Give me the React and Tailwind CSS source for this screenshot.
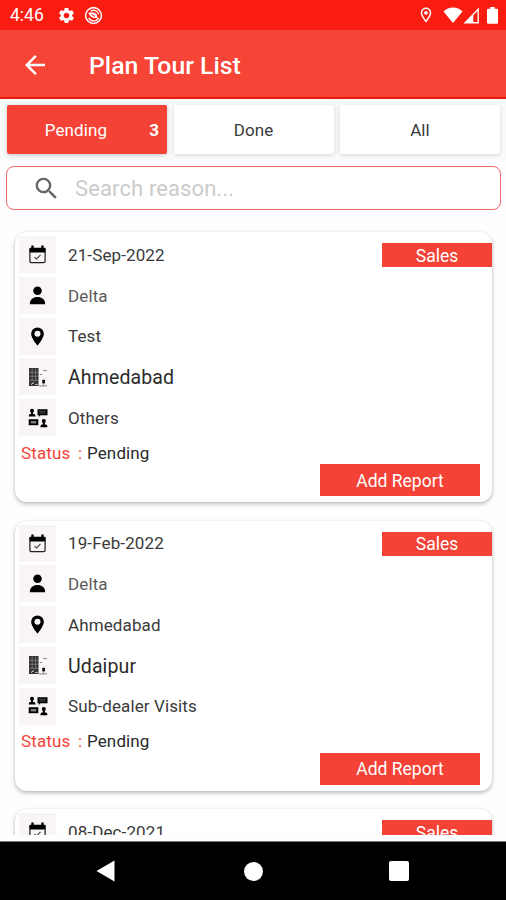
import { MdArrowBack, MdSearch, MdSettings, MdOutlineLocationOn } from 'react-icons/md'

const visits = [
  { date: '21-Sep-2022', dealer: 'Delta', place: 'Test', city: 'Ahmedabad', reason: 'Others', status: 'Pending', type: 'Sales' },
  { date: '19-Feb-2022', dealer: 'Delta', place: 'Ahmedabad', city: 'Udaipur', reason: 'Sub-dealer Visits', status: 'Pending', type: 'Sales' },
  { date: '08-Dec-2021', type: 'Sales' },
]

function CalendarIcon() {
  return (
    <svg className="size-[19px]" viewBox="0 0 20 20" fill="none">
      <path d="M2 7.500V17q0 1.500 1.500 1.500h13q1.500 0 1.500-1.500V7.500" stroke="#222" strokeWidth="1.300" />
      <path d="M1.300 8V4.300Q1.300 2.800 2.800 2.800H3.500V.500h2.500v2.300h8V.500h2.500v2.300h.700Q18.700 2.800 18.700 4.300V8z" fill="#000" />
      <path d="M6.700 12.700l2.300 2 4.200-4.300" stroke="#444" strokeWidth="1.200" />
    </svg>
  )
}

function PersonIcon() {
  return (
    <svg className="size-[19px]" viewBox="0 0 20 20">
      <circle cx="10" cy="5" r="4.500" />
      <path d="M2 19.300v-1c0-4 3.500-6.800 8-6.800s8 2.800 8 6.800v1z" />
    </svg>
  )
}

function PinIcon() {
  return (
    <svg className="size-[19px]" viewBox="0 0 20 20">
      <path fillRule="evenodd" d="M10 .500a6.700 6.700 0 0 0-6.700 6.700C3.300 12 10 19.700 10 19.700s6.700-7.700 6.700-12.500A6.700 6.700 0 0 0 10 .500zm0 3.400a3.200 3.200 0 1 1 0 6.400 3.200 3.200 0 0 1 0-6.400z" />
    </svg>
  )
}

function BuildingIcon() {
  return (
    <svg className="size-5" viewBox="0 0 20 20" fill="none">
      <path d="M1 1h9.500v18H1z" fill="#333" />
      <path d="M1 5.300h9M1 9.300h9M1 13.300h9M4.200 1.500v12.500M7.500 1.500v12.500" stroke="#888" strokeWidth=".7" />
      <path d="M3 17.500l3-2M7.500 17.500h2" stroke="#ddd" strokeWidth="1" />
      <path d="M11.800 7.500h2.300M15 3.600h4" stroke="#888" strokeWidth="1" />
      <path d="M14.200 12.800h2.800v3.600h-2.800z" fill="#111" />
      <path d="M15.600 16v2.500M11 18.900h8" stroke="#777" strokeWidth=".9" />
    </svg>
  )
}

function MeetingIcon() {
  return (
    <svg className="size-5" viewBox="0 0 20 20">
      <circle cx="4" cy="2.800" r="2" />
      <path d="M3 4h2v2h1.300Q7.500 6 7.500 8.500H.700Q.700 6 1.900 6H3z" />
      <path d="M9.500 1.200h10v6h-7L10.800 9V7.200H9.500z" />
      <path d="M11.500 3.300h6M11.500 5.100h6" stroke="#777" strokeWidth=".7" />
      <path d="M.700 11.200h9.600v6H.700z" />
      <path d="M2.800 13.100h5.400v2.300H2.800z" fill="#888" />
      <circle cx="15.800" cy="13" r="2" />
      <path d="M14.800 14h2v2.500h1.300q1.300 0 1.300 2.700h-7q0-2.700 1.300-2.700h1.100z" />
    </svg>
  )
}

function StatusBar() {
  return (
    <div className="flex h-[30px] shrink-0 items-center bg-[#fa1c10] pr-[8px] pl-[10px] text-white">
      <span className="w-[47px] pt-[2px] text-[17.500px] leading-none">4:46</span>
      <MdSettings className="size-[19px]" />
      <svg className="ml-[8px] size-[19px]" viewBox="0 0 20 20" fill="none" stroke="#fff">
        <circle cx="10" cy="10" r="8.300" strokeWidth="1.600" />
        <path d="M5 12.500A5.700 5.700 0 0 0 15.300 12.300M7 5.300a5.700 5.700 0 0 1 8.500 3.500" strokeWidth="1.400" />
        <path d="M4.500 7.300c3.500-1.500 7-.800 9 1.700l.8 4-5-.700C7 11.300 5.500 9.500 4.500 7.300z" fill="#fff" stroke="none" />
        <path d="M7.500 8.700l4 2.300" stroke="#fa1c10" strokeWidth="1" />
      </svg>
      <MdOutlineLocationOn className="ml-auto size-[18px]" />
      <svg className="ml-[8px] h-[18px] w-5" viewBox="0 0 20 18">
        <path d="M.500 5.500C5.500.300 14.500.300 19.500 5.500L10 17z" fill="#fff" />
      </svg>
      <svg className="size-[17px]" viewBox="0 0 17 17" fill="none">
        <path d="M2.200 15.700L15.200 2.300v13.400z" stroke="#fff" strokeWidth="1.400" />
        <path d="M2 16L10.300 7.500V16z" fill="#fff" />
      </svg>
      <svg className="ml-[7px] h-[17px] w-[11px]" viewBox="0 0 11 17">
        <path d="M3.300 0h4.400v1.800h2.100q1.200 0 1.200 1.200v12.600q0 1.200-1.200 1.200H1.200Q0 16.800 0 15.600V3q0-1.200 1.200-1.200h2.100z" fill="#fff" />
      </svg>
    </div>
  )
}

function Detail({ icon, className, children }) {
  return (
    <div className="flex items-center">
      <div className="flex size-[37px] items-center justify-center bg-[#f8f5f4]">{icon}</div>
      <span className={`ml-3 pt-[2px] ${className}`}>{children}</span>
    </div>
  )
}

function VisitCard({ visit }) {
  return (
    <article className="relative h-[270px] shrink-0 rounded-xl bg-white pt-[4px] pl-[4px] shadow-[0_2px_4px_rgba(0,0,0,0.26),0_0_2px_rgba(0,0,0,0.08)]">
      <div className="flex flex-col gap-[3.750px] text-[17px] tracking-[0.120px] text-[#3a3a3a]">
        <Detail icon={<CalendarIcon />} className="">{visit.date}</Detail>
        {visit.dealer && <Detail icon={<PersonIcon />} className="text-[#5a5a5a]">{visit.dealer}</Detail>}
        {visit.place && <Detail icon={<PinIcon />} className="">{visit.place}</Detail>}
        {visit.city && <Detail icon={<BuildingIcon />} className="text-[19.500px] text-[#2a2a2a]">{visit.city}</Detail>}
        {visit.reason && <Detail icon={<MeetingIcon />} className="">{visit.reason}</Detail>}
      </div>
      {visit.status && (
        <>
          <p className="mt-[4px] ml-[2px] flex h-6 items-center pt-[3px] text-[17px] tracking-[0.120px] text-[#2a2a2a]">
            <span className="w-[57px] text-[#f44336]">Status</span>
            <span className="w-[9px] text-[#f44336]">:</span>
            {visit.status}
          </p>
          <button className="mr-[12px] ml-auto block h-8 w-40 bg-[#f44336] pt-[2px] text-[17.500px] text-white">Add Report</button>
        </>
      )}
      <span className="absolute top-[11px] right-0 flex h-6 w-[110px] items-center justify-center bg-[#f44336] pt-[2px] text-[17.500px] text-white">
        {visit.type}
      </span>
    </article>
  )
}

function App() {
  return (
    <div className="flex h-[900px] w-[506px] flex-col overflow-hidden bg-[#fefefe] font-[Roboto,sans-serif]">
      <StatusBar />
      <header className="flex h-[69px] shrink-0 items-center border-b-2 border-[#e8180f] bg-[#f64437] pt-[2px] pl-[20px] text-white">
        <MdArrowBack className="size-[30px]" />
        <h1 className="ml-[39px] pt-[3px] text-[24.800px] font-medium">Plan Tour List</h1>
      </header>

      <nav className="grid h-[61px] shrink-0 grid-cols-3 gap-[6.500px] bg-[#f8f9f9] pt-[6px] pr-[6px] pl-[7px] text-[17px] tracking-[0.120px] text-[#3a3a3a]">
        <button className="relative h-[49px] rounded-xs bg-[#f44336] pt-[2px] pr-[22px] text-white shadow-[0_1px_4px_rgba(0,0,0,0.2)]">
          Pending
          <span className="absolute top-[13px] right-[8px] font-bold">3</span>
        </button>
        <button className="h-[49px] rounded-xs bg-white pt-[2px] shadow-[0_1px_4px_rgba(0,0,0,0.14)]">Done</button>
        <button className="h-[49px] rounded-xs bg-white pt-[2px] shadow-[0_1px_4px_rgba(0,0,0,0.14)]">All</button>
      </nav>

      <div className="mr-[5px] ml-[6px] mt-[6px] flex h-[44px] shrink-0 items-center rounded-lg border-[1.500px] border-[#ee6a62] bg-white pl-[25px]">
        <MdSearch className="size-[29px] text-[#666]" />
        <input
          className="ml-[14px] w-80 bg-transparent text-[22px] tracking-[0.120px] outline-none placeholder:text-[#cbcbcb]"
          placeholder="Search reason..."
        />
      </div>

      <main className="flex h-[625px] shrink-0 flex-col gap-[18.500px] overflow-hidden pt-[22px] pr-[14px] pl-[15px]">
        {visits.map((visit) => (
          <VisitCard key={visit.date} visit={visit} />
        ))}
      </main>

      <footer className="mt-auto flex h-[59px] shrink-0 items-center border-t border-[#777] bg-black pl-[96px]">
        <svg className="h-[22px] w-[19px]" viewBox="0 0 19 22">
          <path d="M.500 11L18.500.500v21z" fill="#fff" />
        </svg>
        <span className="ml-[129px] size-[19px] rounded-full bg-white" />
        <span className="ml-[126px] size-5 rounded-xs bg-white" />
      </footer>
    </div>
  )
}

export default App
